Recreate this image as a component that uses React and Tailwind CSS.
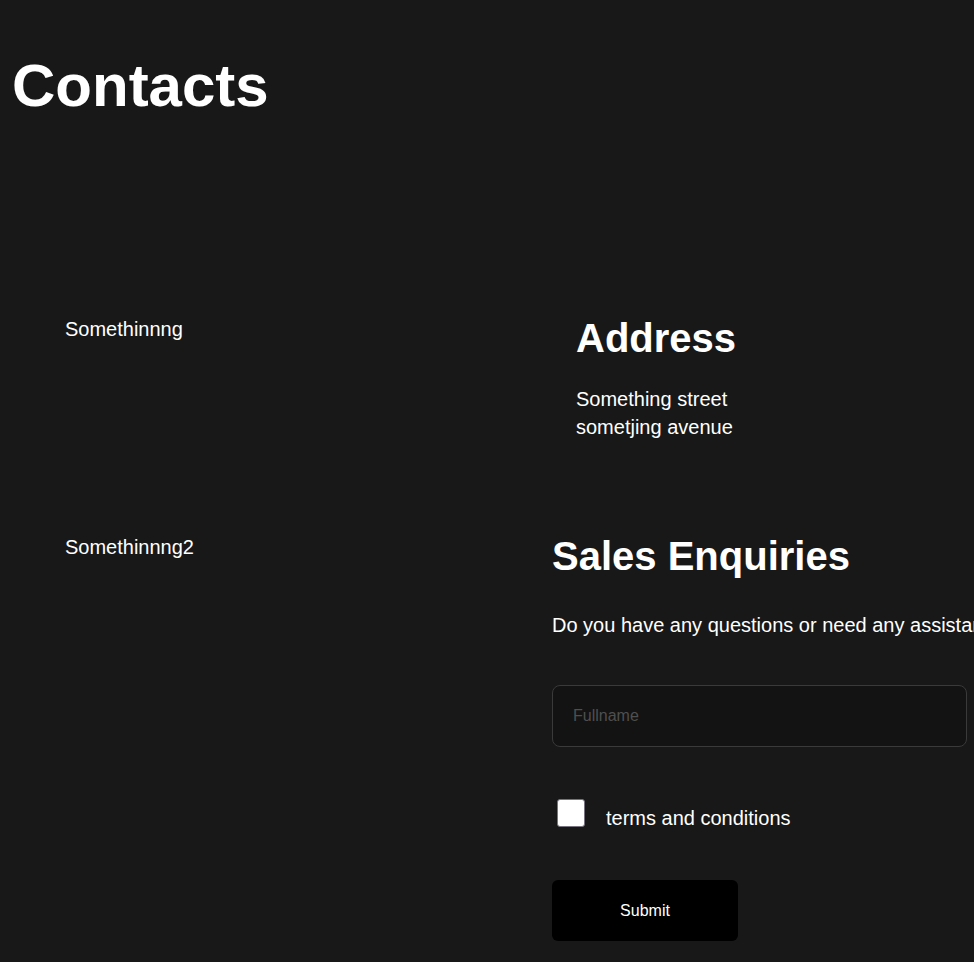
export default function App() {
  return (
    <div className="min-h-screen w-full overflow-hidden bg-[#181818] text-white font-['Liberation_Sans',Arial,sans-serif]">
      <h1 className="pl-3 pt-[51px] text-[60px] font-bold leading-[69px]">Contacts</h1>

      <div className="mt-[195px] flex">
        <div className="w-[487px] shrink-0 pl-[65px]">
          <p className="text-xl leading-7">Somethinnng</p>
        </div>
        <div className="shrink-0 pl-[89px]">
          <h2 className="text-[40px] font-bold leading-[46px]">Address</h2>
          <p className="mt-6 text-xl leading-7">
            Something street
            <br />
            sometjing avenue
          </p>
        </div>
      </div>

      <div className="mt-[92px] flex pb-6">
        <div className="w-[487px] shrink-0 pl-[65px]">
          <p className="text-xl leading-7">Somethinnng2</p>
        </div>
        <form className="shrink-0 pl-[65px]" onSubmit={(e) => e.preventDefault()}>
          <h2 className="text-[40px] font-bold leading-[46px]">Sales Enquiries</h2>
          <p className="mt-8 whitespace-nowrap text-xl leading-7">
            Do you have any questions or need any assistance? Get in touch with our sales team.
          </p>
          <input
            type="text"
            placeholder="Fullname"
            className="mt-[46px] block h-[62px] w-[415px] rounded-lg border border-[#3a3a3a] bg-[#131313] px-5 text-base text-white placeholder:text-[#4f4f4f] outline-none"
          />
          <label className="mt-[52px] flex items-end">
            <input type="checkbox" className="peer sr-only" />
            <span className="mb-[5px] ml-[5px] h-[28px] w-[28px] rounded-[3px] border border-[#77737f] bg-white peer-checked:bg-blue-600"></span>
            <span className="ml-[21px] text-xl leading-7">terms and conditions</span>
          </label>
          <button
            type="submit"
            className="mt-[48px] h-[61px] w-[186px] rounded-md bg-black text-base text-white"
          >
            Submit
          </button>
        </form>
      </div>
    </div>
  )
}
